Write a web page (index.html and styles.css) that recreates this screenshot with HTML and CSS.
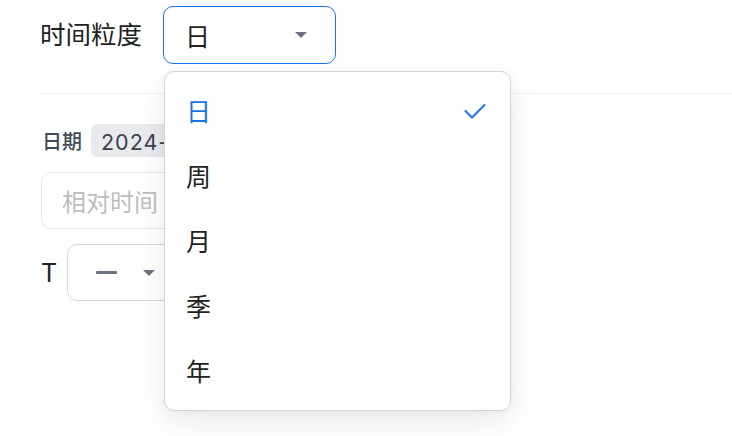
FILE: index.html
```html
<!DOCTYPE html>
<html lang="zh-CN">
<head>
<meta charset="utf-8">
<title>时间粒度</title>
<link rel="stylesheet" href="styles.css">
</head>
<body>
<div class="page">
  <div class="header">
    <span class="label">时间粒度</span>
    <div class="select-wrap">
      <div class="select active">
        <span class="value">日</span>
        <span class="caret"></span>
      </div>
      <ul class="menu">
        <li class="selected"><span>日</span>
          <svg class="check" width="22" height="16" viewBox="0 0 22 16"><polyline points="1.5,8 8,14.5 20.5,2" fill="none" stroke="#1a73e8" stroke-width="2" stroke-linecap="round" stroke-linejoin="round"/></svg>
        </li>
        <li><span>周</span></li>
        <li><span>月</span></li>
        <li><span>季</span></li>
        <li><span>年</span></li>
      </ul>
    </div>
  </div>
  <div class="content">
    <div class="row">
      <span class="field-label">日期</span>
      <span class="tag">2024-01-01 至 2024-01-31</span>
    </div>
    <div class="input">相对时间</div>
    <div class="row t-row">
      <span class="t-label">T</span>
      <div class="select small">
        <span class="dash"></span>
        <span class="caret"></span>
      </div>
    </div>
  </div>
</div>
</body>
</html>
```
FILE: styles.css
```css
html, body {
  margin: 0;
  min-height: 436px;
}

body {
  background: #ffffff;
  font-family: Inter, "Noto Sans CJK SC", sans-serif;
  color: #1f1f1f;
}

.page {
  min-height: 436px;
  padding-left: 40px;
}

.header {
  display: flex;
  align-items: center;
  gap: 21px;
  padding: 6px 0 29px;
  border-bottom: 1px solid #f0f0f2;
}

.label {
  font-size: 25.5px;
  line-height: 1;
  color: #222222;
}

.select-wrap {
  position: relative;
}

.select {
  box-sizing: border-box;
  width: 173px;
  height: 58px;
  border: 1px solid #1a73e8;
  border-radius: 10px;
  display: flex;
  align-items: center;
  justify-content: space-between;
  padding: 0 28px 0 21px;
  font-size: 25px;
  color: #222222;
}

.caret {
  width: 0;
  height: 0;
  border-left: 6px solid transparent;
  border-right: 6px solid transparent;
  border-top: 6px solid #6b7280;
}

.menu {
  position: absolute;
  top: 65px;
  left: 1px;
  z-index: 10;
  box-sizing: border-box;
  width: 347px;
  margin: 0;
  padding: 5px 0 8px;
  list-style: none;
  background: #ffffff;
  border: 1px solid #d4d4dc;
  border-radius: 10px;
  box-shadow: 0 12px 32px rgba(0, 0, 0, 0.08), 0 2px 8px rgba(0, 0, 0, 0.04);
}

.menu li {
  height: 65px;
  display: flex;
  align-items: center;
  justify-content: space-between;
  padding: 0 24px 0 21px;
  font-size: 25px;
  color: #222222;
}

.menu li.selected {
  color: #1a73e8;
}

.check {
  margin-top: 3px;
}

.content {
  display: flex;
  flex-direction: column;
  align-items: flex-start;
  gap: 15px;
  padding: 30px 0 0 1px;
}

.row {
  display: flex;
  align-items: center;
  gap: 9px;
}

.field-label {
  font-size: 20px;
  font-weight: 500;
  color: #434b58;
  padding-left: 1px;
}

.tag {
  display: flex;
  align-items: center;
  height: 33px;
  padding: 0 10px;
  background: #e8eaee;
  border-radius: 6px;
  font-size: 21.5px;
  letter-spacing: 1px;
  color: #3c4250;
  white-space: nowrap;
}

.input {
  box-sizing: border-box;
  width: 420px;
  height: 57px;
  display: flex;
  align-items: center;
  padding-left: 20px;
  border: 1px solid #e6e8eb;
  border-radius: 10px;
  font-size: 24px;
  color: #bdbdbd;
}

.t-row {
  gap: 10px;
}

.t-label {
  font-size: 25px;
  color: #222222;
}

.select.small {
  width: 117px;
  height: 57px;
  border-color: #d6d8dc;
  justify-content: flex-start;
  gap: 26px;
  padding: 0 0 0 28px;
}

.dash {
  width: 21px;
  height: 2.5px;
  background: #6b7280;
  border-radius: 1px;
}
```
